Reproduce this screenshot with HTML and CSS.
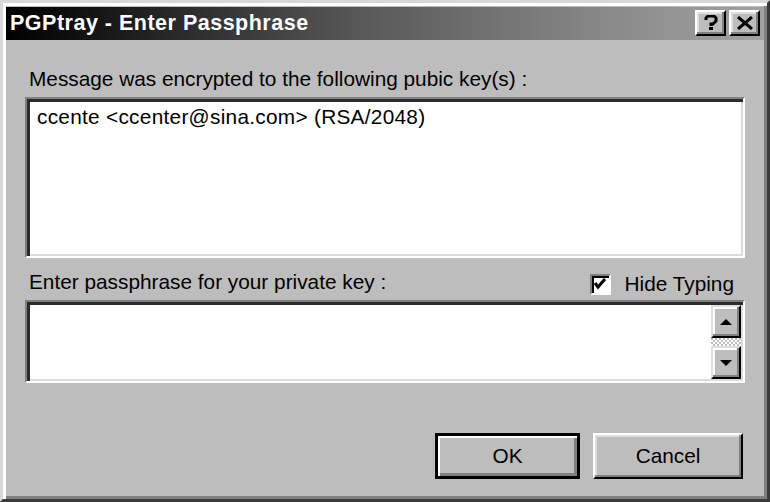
FILE: index.html
```html
<!DOCTYPE html>
<html>
<head>
<meta charset="utf-8">
<link rel="stylesheet" href="styles.css">
</head>
<body>
<div class="window">
  <div class="titlebar">
    <span class="title">PGPtray - Enter Passphrase</span>
    <div class="tbuttons">
      <div class="tbtn">
        <svg width="14" height="16" viewBox="0 0 14 16"><path d="M2 5 V3 L4 1 H10 L12 3 V6 L9 9 H7 V11" fill="none" stroke="#000" stroke-width="3"/><rect x="5" y="12" width="4" height="3" fill="#000"/></svg>
      </div>
      <div class="tbtn">
        <svg width="18" height="14" viewBox="0 0 18 14"><path d="M2 1 L16 13 M16 1 L2 13" stroke="#000" stroke-width="3"/></svg>
      </div>
    </div>
  </div>
  <div class="content">
    <div class="label">Message was encrypted to the following pubic key(s) :</div>
    <div class="field keys">
      <div class="keytext">ccente &lt;ccenter@sina.com&gt; (RSA/2048)</div>
    </div>
    <div class="row2">
      <div class="label">Enter passphrase for your private key :</div>
      <div class="hide">
        <span class="checkbox">
          <svg width="14" height="14" viewBox="0 0 14 14"><path d="M2 6 L5 10 L12 2" fill="none" stroke="#000" stroke-width="3"/></svg>
        </span>
        <span>Hide Typing</span>
      </div>
    </div>
    <div class="field pass">
      <div class="passarea"></div>
      <div class="scroll">
        <div class="sbtn">
          <svg width="14" height="8" viewBox="0 0 14 8"><path d="M7 1 L13 7 H1 Z" fill="#000"/></svg>
        </div>
        <div class="track"></div>
        <div class="sbtn">
          <svg width="14" height="8" viewBox="0 0 14 8"><path d="M1 1 H13 L7 7 Z" fill="#000"/></svg>
        </div>
      </div>
    </div>
    <div class="buttons">
      <div class="btn default">OK</div>
      <div class="btn cancel">Cancel</div>
    </div>
  </div>
</div>
</body>
</html>
```

FILE: styles.css
```css
html, body {
  margin: 0;
  padding: 0;
  background: #bdbdbd;
}
body {
  font-family: "Liberation Sans", Arial, sans-serif;
  font-size: 20.8px;
  color: #000;
}
.window {
  width: 770px;
  height: 502px;
  box-sizing: border-box;
  background: #bdbdbd;
  border-style: solid;
  border-width: 3px;
  border-color: #d8d8d8 #3a3a3a #3a3a3a #d8d8d8;
  box-shadow: inset 3px 3px 0 #ffffff, inset -3px -3px 0 #808080;
  padding: 4px 3px 3px 3px;
  display: flex;
  flex-direction: column;
}
.titlebar {
  height: 33px;
  flex: none;
  background: linear-gradient(to right, #000000 0%, #151515 12%, #555555 45%, #8a8a8a 80%, #a2a2a2 100%);
  display: flex;
  align-items: center;
  justify-content: space-between;
  padding: 0 4px 0 4px;
}
.title {
  color: #fff;
  font-weight: bold;
  font-size: 21.5px;
  letter-spacing: 0.5px;
}
.tbuttons {
  display: flex;
  gap: 3px;
  margin-top: -2px;
}
.tbtn {
  width: 31px;
  height: 26px;
  box-sizing: border-box;
  background: #bdbdbd;
  border-style: solid;
  border-width: 2px;
  border-color: #ffffff #000000 #000000 #ffffff;
  box-shadow: inset -2px -2px 0 #808080, inset 2px 2px 0 #dfdfdf;
  display: flex;
  align-items: center;
  justify-content: center;
}
.content {
  flex: 1;
  display: flex;
  flex-direction: column;
  padding: 26px 19px 0 19px;
}
.label {
  height: 26px;
  line-height: 26px;
  padding-left: 4px;
  white-space: nowrap;
}
.field {
  box-sizing: border-box;
  background: #fff;
  border-style: solid;
  border-width: 2px;
  border-color: #808080 #ffffff #ffffff #808080;
  box-shadow: inset 3px 3px 0 #2a2a2a, inset -2px -2px 0 #dcdcdc;
}
.keys {
  margin-top: 5px;
  height: 161px;
  padding: 6px 10px;
}
.keytext {
  line-height: 24px;
  letter-spacing: 0.28px;
}
.row2 {
  display: flex;
  justify-content: space-between;
  align-items: center;
  margin-top: 6px;
  height: 36px;
}
.hide {
  display: flex;
  align-items: center;
  gap: 14px;
  padding-right: 11px;
  margin-top: 4px;
}
.checkbox {
  width: 21px;
  height: 21px;
  box-sizing: border-box;
  background: #fff;
  border-style: solid;
  border-width: 2px;
  border-color: #808080 #ffffff #ffffff #808080;
  box-shadow: inset 2px 2px 0 #000;
  display: flex;
  align-items: center;
  justify-content: center;
}
.pass {
  height: 83px;
  display: flex;
  padding: 3px 2px 2px 3px;
}
.passarea {
  flex: 1;
}
.scroll {
  width: 30px;
  display: flex;
  flex-direction: column;
}
.sbtn {
  height: 33px;
  box-sizing: border-box;
  background: #bdbdbd;
  border-style: solid;
  border-width: 2px;
  border-color: #dfdfdf #000000 #000000 #dfdfdf;
  box-shadow: inset -2px -2px 0 #808080, inset 2px 2px 0 #fff;
  display: flex;
  align-items: center;
  justify-content: center;
}
.track {
  flex: 1;
  background: repeating-conic-gradient(#ffffff 0 25%, #bdbdbd 0 50%) 0 0 / 4px 4px;
}
.buttons {
  display: flex;
  justify-content: flex-end;
  gap: 13px;
  margin-top: 50px;
  padding-right: 2px;
}
.btn {
  height: 46px;
  box-sizing: border-box;
  display: flex;
  align-items: center;
  justify-content: center;
  background: #bdbdbd;
  border-style: solid;
  border-width: 2px;
  border-color: #ffffff #000000 #000000 #ffffff;
  box-shadow: inset -2px -2px 0 #808080, inset 2px 2px 0 #dfdfdf;
}
.btn.default {
  width: 145px;
  border-width: 3px;
  border-color: #000;
  box-shadow: inset 2px 2px 0 #ffffff, inset -3px -3px 0 #808080;
}
.btn.cancel {
  width: 150px;
}
```
